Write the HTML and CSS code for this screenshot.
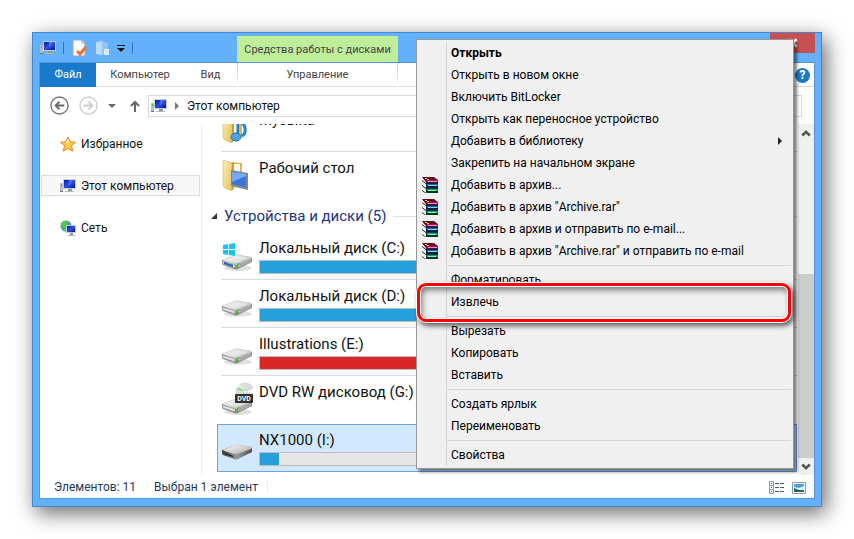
FILE: index.html
```html
<!DOCTYPE html>
<html lang="ru">
<head>
  <meta charset="UTF-8">
  <meta name="viewport" content="width=device-width, initial-scale=1.0">
  <title>Этот компьютер</title>
  <link rel="stylesheet" href="styles.css">
</head>
<body>

  <!-- Иконки -->
  <svg class="sprite" aria-hidden="true">
    <defs>
      <linearGradient id="gMetal" x1="0" y1="0" x2="1" y2="1">
        <stop offset="0" stop-color="#f8f8f8"/><stop offset=".6" stop-color="#cfcfcf"/><stop offset="1" stop-color="#909090"/>
      </linearGradient>
      <linearGradient id="gScreen" x1="0" y1="0" x2="1" y2="1">
        <stop offset="0" stop-color="#0516a8"/><stop offset=".5" stop-color="#2c50e0"/><stop offset="1" stop-color="#0414a0"/>
      </linearGradient>
      <linearGradient id="gFolder" x1="0" y1="0" x2="1" y2="1">
        <stop offset="0" stop-color="#fdf3b8"/><stop offset="1" stop-color="#e2bf5c"/>
      </linearGradient>
      <linearGradient id="gDark" x1="0" y1="0" x2="1" y2="0">
        <stop offset="0" stop-color="#3c3c3c"/><stop offset=".5" stop-color="#9a9a9a"/><stop offset="1" stop-color="#4a4a4a"/>
      </linearGradient>
    </defs>
    <symbol id="pc" viewBox="0 0 16 16">
      <path d="M0 5h3v9H0z" fill="#b9bdc0"/><path d="M1 6h1v2H1z" fill="#43c32c"/><path d="M0 13h3v1H0z" fill="#6c7277"/>
      <path d="M3 1h13v10H3z" fill="#c9ced2"/><path d="M4 2h11v8H4z" fill="url(#gScreen)"/><path d="M9 2h4L9 8z" fill="#6b8dff" opacity=".6"/>
      <path d="M8 11h4v2H8z" fill="#8f9599"/><path d="M5 13h9v1H5z" fill="#b5babd"/>
    </symbol>
    <symbol id="drive" viewBox="0 0 32 20">
      <ellipse cx="17" cy="16" rx="14" ry="3" fill="#000" opacity=".12"/>
      <path d="M1 8L14 3Q16 2 18 3L30 5Q31 6 31 7V10L17 17Q15 18 13 17L2 13Q1 12 1 11Z" fill="#8b8b8b"/>
      <path d="M1 8L14 3Q16 2 18 3L30 5Q31 6 30 7L17 13Q15 13 13 13Z" fill="url(#gMetal)"/>
      <path d="M5 8L15 4L27 6L16 11Z" fill="#fff" opacity=".4"/>
      <path d="M1 9L14 13V16L2 12Z" fill="#e2e2e2" stroke="#888" stroke-width=".5"/>
      <path d="M15 13L30 7V10L17 16Z" fill="#a8a8a8"/>
      <path d="M16 12l2-1v4l-2 1z" fill="#35b51e"/><path d="M17 13l1-.5v1.500l-1 .5z" fill="#b6ff6c"/>
    </symbol>
    <symbol id="books" viewBox="0 0 16 16">
      <path d="M0 0h12l4 3v3H4z" fill="#5e0f2b"/><path d="M4 3h12v2H5z" fill="#a8175f"/><path d="M6 4h9v1H6z" fill="#f08cc6"/>
      <path d="M3 1h2v1H3zM5 2h2v1H5z" fill="#e0d020"/>
      <path d="M4 6h12v5H4z" fill="#082050"/><path d="M5 7h11v2H5z" fill="#1868b8"/><path d="M6 8h9v1H6z" fill="#8ed0ff"/>
      <path d="M4 11h12v5H4z" fill="#06382a"/><path d="M5 12h11v2H5z" fill="#18a060"/><path d="M6 13h8v1H6z" fill="#90f0c0"/>
      <path d="M0 1l4 4v1L0 3zM0 6l4 4v1L0 8zM0 11l4 4v1L0 13z" fill="#fff"/>
      <path d="M0 3l4 3v1L0 4zM0 8l4 3v1L0 9zM0 13l4 3H3L0 14z" fill="#222"/>
    </symbol>
    <symbol id="folder" viewBox="0 0 32 32">
      <path d="M10 3l11 1v22l-11 3z" fill="#d9b65a"/>
      <path d="M12 5h7v18h-7z" fill="#f3f7fa"/>
      <path d="M2 1l9 3v28L4 29Q2 28 2 26z" fill="url(#gFolder)" stroke="#d4b050" stroke-width=".6"/>
      <path d="M11 4l2-1v26l-2 3z" fill="#c89f3e"/>
    </symbol>
  </svg>

  <div class="window">
    <header class="titlebar">
      <div class="quick">
        <svg class="ico"><use href="#pc"/></svg>
        <span class="bar"></span>
        <button class="plain" aria-label="Свойства объекта">
          <svg class="ico" viewBox="0 0 16 16"><path d="M2 0h9l3 3v13H2z" fill="#fff" stroke="#9aa3ad"/><path d="M11 0v3h3" fill="#dde3ea" stroke="#9aa3ad"/><path d="M6 11l3 3 6-7" fill="none" stroke="#ee7038" stroke-width="3"/></svg>
        </button>
        <button class="plain" aria-label="Новая папка">
          <svg class="ico" viewBox="0 0 16 16"><path d="M2 2l6-1v14l-6-1z" fill="#b9dbf8"/><path d="M8 1l6 2v12H8z" fill="#94c4ee"/><path d="M10 9h5v6h-5z" fill="#d8ebfa"/></svg>
        </button>
        <button class="plain" aria-label="Настройка панели">
          <svg class="caret" viewBox="0 0 8 8"><path d="M0 1h8v1H0zM0 4h8L4 8z" fill="#111"/></svg>
        </button>
        <span class="bar"></span>
      </div>
      <div class="context-title">Средства работы с дисками</div>
      <button class="close" aria-label="Закрыть">
        <svg viewBox="0 0 8 8"><path d="M1 1l6 6M7 1L1 7" stroke="#fff" stroke-width="2"/></svg>
      </button>
    </header>

    <div class="client">
      <nav class="tabs">
        <a class="tab file" href="#file">Файл</a>
        <a class="tab" href="#computer">Компьютер</a>
        <a class="tab" href="#view">Вид</a>
        <a class="tab context" href="#manage">Управление</a>
        <button class="plain help" aria-label="Справка">?</button>
      </nav>

      <div class="address-row">
        <button class="plain" aria-label="Назад">
          <svg class="nav-ico" viewBox="0 0 20 20"><circle cx="10" cy="10" r="9" fill="none" stroke="#777" stroke-width="1.500"/><path d="M15 10H6M10 6l-4 4 4 4" fill="none" stroke="#666" stroke-width="2"/></svg>
        </button>
        <button class="plain" aria-label="Вперёд">
          <svg class="nav-ico" viewBox="0 0 20 20"><circle cx="10" cy="10" r="9" fill="none" stroke="#ccc" stroke-width="1.500"/><path d="M5 10h9M10 6l4 4-4 4" fill="none" stroke="#ccc" stroke-width="2"/></svg>
        </button>
        <button class="plain" aria-label="Последние расположения">
          <svg class="caret" viewBox="0 0 8 8"><path d="M0 2h8L4 6z" fill="#666"/></svg>
        </button>
        <button class="plain up" aria-label="Вверх">
          <svg viewBox="0 0 10 12"><path d="M5 12V2M1 6l4-4 4 4" fill="none" stroke="#666" stroke-width="2"/></svg>
        </button>
        <div class="address">
          <svg class="ico"><use href="#pc"/></svg>
          <svg class="crumb" viewBox="0 0 4 8"><path d="M0 0l4 4-4 4z" fill="#777"/></svg>
          <a href="#pc">Этот компьютер</a>
        </div>
        <input class="search" type="search" aria-label="Поиск">
      </div>

      <div class="content">
        <aside class="sidebar">
          <a class="place" href="#favorites">
            <svg class="ico" viewBox="0 0 16 16"><path d="M8 1l2.200 4.700 5.300.6-4 3.500 1.200 5.400L8 12.500l-4.700 2.700 1.200-5.400-4-3.500 5.300-.6z" fill="#ffc94c" stroke="#e8862c"/><path d="M8 3l1.300 4H5z" fill="#fff0b0"/></svg>
            Избранное
          </a>
          <a class="place selected" href="#pc"><svg class="ico"><use href="#pc"/></svg>Этот компьютер</a>
          <a class="place" href="#network">
            <svg class="ico" viewBox="0 0 16 16"><circle cx="6" cy="6" r="5.500" fill="#3b9fe0"/><path d="M2 2l4-1 2 2-2 2-1 3-4-1zM5 8l3 1-2 3-2-2z" fill="#5cc832"/><path d="M6 5h10v8H6z" fill="#c5ccd2"/><path d="M7 6h8v6H7z" fill="url(#gScreen)"/><path d="M10 13h3v2h-3z" fill="#8e969c"/><path d="M8 15h7v1H8z" fill="#aab0b5"/></svg>
            Сеть
          </a>
        </aside>

        <main class="files">
          <div class="tile">
            <svg class="tile-ico" viewBox="0 0 32 32"><use href="#folder"/><path d="M17 26V11q6 0 7 6t-3 8" fill="none" stroke="#2683c8" stroke-width="3"/><ellipse cx="15" cy="26" rx="5" ry="4" fill="#4aa5e4" stroke="#1c70b0"/></svg>
            <div class="info"><span class="name">Музыка</span></div>
          </div>
          <div class="tile last">
            <svg class="tile-ico" viewBox="0 0 32 32"><use href="#folder"/><path d="M10 11l17 3v17l-17-4z" fill="#7c8791"/><path d="M11 13l14 2v13l-14-3z" fill="#3676d8"/><path d="M11 13l14 2v2l-14 6z" fill="#77aaf3"/></svg>
            <div class="info"><span class="name">Рабочий стол</span></div>
          </div>

          <h2 class="group">
            <svg class="fold" viewBox="0 0 6 6"><path d="M6 0v6H0z" fill="#333"/></svg>
            Устройства и диски (5)
          </h2>

          <div class="tile">
            <svg class="tile-ico" viewBox="0 0 32 32">
              <use href="#drive" y="13" width="32" height="20"/>
              <path d="M3 23l9 3v2l-9-3z" fill="#1565b5"/>
              <path d="M2 6l5-1v5H2zM8 5l6-1v6H8zM2 11h5v5l-5-1zM8 11h6v6l-6-1z" fill="#10c4f8"/>
            </svg>
            <div class="info"><span class="name">Локальный диск (C:)</span><div class="usage"><div class="fill" style="width: 78%"></div></div></div>
          </div>
          <div class="tile">
            <svg class="tile-ico" viewBox="0 0 32 32"><use href="#drive" y="11" width="32" height="20"/></svg>
            <div class="info"><span class="name">Локальный диск (D:)</span><div class="usage"><div class="fill" style="width: 85%"></div></div></div>
          </div>
          <div class="tile">
            <svg class="tile-ico" viewBox="0 0 32 32"><use href="#drive" y="11" width="32" height="20"/></svg>
            <div class="info"><span class="name">Illustrations (E:)</span><div class="usage"><div class="fill full" style="width: 96%"></div></div></div>
          </div>
          <div class="tile last">
            <svg class="tile-ico" viewBox="0 0 32 32">
              <use href="#drive" y="13" width="32" height="20"/>
              <circle cx="24" cy="9" r="9" fill="#d9dcdd" stroke="#b4b8ba" stroke-width=".5"/><path d="M24 9L17 4l2-2zM24 9l8-3v4z" fill="#fff"/><path d="M16 6l3-2 5 5z" fill="#8ce07c"/><circle cx="24" cy="9" r="2" fill="#fff" stroke="#999" stroke-width=".5"/>
              <rect x="14" y="11" width="18" height="9" rx="1" fill="#2d3033"/><text class="disc-label" x="23" y="18">DVD</text>
            </svg>
            <div class="info"><span class="name">DVD RW дисковод (G:)</span></div>
          </div>
          <div class="tile selected">
            <svg class="tile-ico" viewBox="0 0 32 32">
              <path d="M1 18L14 13Q16 12 18 13L30 15Q31 16 31 17V20L17 27Q15 28 13 27L2 23Q1 22 1 21Z" fill="url(#gDark)"/>
              <path d="M1 18L14 13Q16 12 18 13L30 15Q31 16 30 17L17 22Q15 22 13 22Z" fill="url(#gMetal)"/>
              <path d="M4 21l8 3v1l-8-3z" fill="#111"/>
            </svg>
            <div class="info"><span class="name">NX1000 (I:)</span><div class="usage"><div class="fill" style="width: 3.500%"></div></div></div>
          </div>
        </main>

        <div class="scrollbar">
          <button class="plain arrow" aria-label="Прокрутить вверх"><svg viewBox="0 0 8 6"><path d="M1 5l3-3 3 3" fill="none" stroke="#555" stroke-width="2"/></svg></button>
          <div class="track"><div class="thumb"></div></div>
          <button class="plain arrow" aria-label="Прокрутить вниз"><svg viewBox="0 0 8 6"><path d="M1 1l3 3 3-3" fill="none" stroke="#555" stroke-width="2"/></svg></button>
        </div>
      </div>

      <footer class="status">
        <span>Элементов: 11</span>
        <span class="picked">Выбран 1 элемент</span>
        <div class="views">
          <button class="plain" aria-label="Таблица">
            <svg class="ico" viewBox="0 0 16 16"><path d="M.5 2.500h4v4h-4zM.5 6.500h4v4h-4zM.5 10.500h4v4h-4z" fill="#fff" stroke="#8d97a3"/><path d="M2 4h1v1H2zM2 12h1v1H2z" fill="#456"/><path d="M2 8h1v1H2z" fill="#e00"/><path d="M6 4h4v1H6zM11 4h4v1h-4zM6 8h4v1H6zM11 8h4v1h-4zM6 12h4v1H6zM11 12h4v1h-4z" fill="#4a5a6c"/></svg>
          </button>
          <button class="plain" aria-label="Крупные значки">
            <svg class="ico" viewBox="0 0 16 16"><path d="M1.500 3.500h13v11h-13z" fill="#fff" stroke="#8d97a3"/><path d="M3 5h10v8H3z" fill="#48a0e0"/><path d="M3 8l5 1 5-2v4H3z" fill="#e5f3fb"/><path d="M3 9l5 2h5v2H3z" fill="#1b6c56"/></svg>
          </button>
        </div>
      </footer>
    </div>
  </div>

  <!-- Контекстное меню диска -->
  <ul class="menu">
    <li><button class="item default">Открыть</button></li>
    <li><button class="item">Открыть в новом окне</button></li>
    <li><button class="item">Включить BitLocker</button></li>
    <li><button class="item">Открыть как переносное устройство</button></li>
    <li><button class="item">Добавить в библиотеку<svg class="more" viewBox="0 0 4 8"><path d="M0 0l4 4-4 4z" fill="#222"/></svg></button></li>
    <li><button class="item">Закрепить на начальном экране</button></li>
    <li><button class="item with-ico"><svg class="ico"><use href="#books"/></svg>Добавить в архив...</button></li>
    <li><button class="item with-ico"><svg class="ico"><use href="#books"/></svg>Добавить в архив "Archive.rar"</button></li>
    <li><button class="item with-ico"><svg class="ico"><use href="#books"/></svg>Добавить в архив и отправить по e-mail...</button></li>
    <li><button class="item with-ico"><svg class="ico"><use href="#books"/></svg>Добавить в архив "Archive.rar" и отправить по e-mail</button></li>
    <li class="sep"></li>
    <li><button class="item">Форматировать</button></li>
    <li class="marked"><button class="item">Извлечь</button></li>
    <li class="sep"></li>
    <li><button class="item">Вырезать</button></li>
    <li><button class="item">Копировать</button></li>
    <li><button class="item">Вставить</button></li>
    <li class="sep"></li>
    <li><button class="item">Создать ярлык</button></li>
    <li><button class="item">Переименовать</button></li>
    <li class="sep"></li>
    <li><button class="item">Свойства</button></li>
  </ul>

</body>
</html>
```
FILE: styles.css
```css
* {
  margin: 0;
  padding: 0;
  box-sizing: border-box;
}

body {
  display: flex;
  height: 100vh;
  padding: 32px;
  overflow: hidden;
  background: #fff;
  font: 12px "Segoe UI", Roboto, "Noto Sans", sans-serif;
  color: #111;
}

a {
  color: inherit;
  text-decoration: none;
}

svg {
  display: block;
  flex: none;
}

.sprite {
  position: absolute;
  width: 0;
  height: 0;
}

.ico {
  width: 16px;
  height: 16px;
}

.caret {
  width: 8px;
  height: 8px;
}

.plain {
  display: flex;
  align-items: center;
  justify-content: center;
  background: none;
  border: none;
  font: inherit;
}

/* Окно */
.window {
  flex: 1;
  display: flex;
  flex-direction: column;
  min-width: 0;
  padding: 0 6px 7px;
  background: #63b1fc;
  border: 1px solid #4488cc;
  box-shadow: 4px 6px 20px rgba(0, 0, 0, 0.6);
}

.titlebar {
  display: grid;
  grid-template-columns: 198px 161px 1fr;
  height: 29px;
}

.quick {
  display: flex;
  align-items: center;
  gap: 7px;
  padding-left: 1px;
}

.quick .bar {
  width: 1px;
  height: 12px;
  background: #3b72ab;
}

.context-title {
  margin-top: 3px;
  background: #bfee9b;
  color: #444;
  font-size: 11px;
  line-height: 27px;
  text-align: center;
  white-space: nowrap;
}

.close {
  display: flex;
  align-items: center;
  justify-content: center;
  justify-self: end;
  width: 45px;
  height: 20px;
  background: #c75050;
  border: none;
}

.close svg {
  width: 10px;
  height: 10px;
}

.client {
  flex: 1;
  display: flex;
  flex-direction: column;
  min-height: 0;
  background: #fff;
  border: 1px solid #4f95d8;
}

/* Лента */
.tabs {
  display: grid;
  grid-template-columns: 56px 88px 53px 161px 1fr;
  align-items: center;
  height: 24px;
  border-bottom: 1px solid #dadbdc;
}

.tab {
  font-size: 11px;
  line-height: 24px;
  text-align: center;
  color: #444;
}

.tab.file {
  background: #1979ca;
  color: #fff;
}

.tab.context {
  border: solid;
  border-width: 0 1px;
  border-image: linear-gradient(#c4c4c4, #fff) 1;
}

.help {
  justify-self: end;
  width: 15px;
  height: 15px;
  margin-right: 4px;
  border-radius: 50%;
  background: #1979ca;
  color: #fff;
  font-weight: bold;
}

.address-row {
  display: flex;
  align-items: center;
  height: 37px;
  padding: 0 12px 0 10px;
  gap: 10px;
}

.nav-ico {
  width: 19px;
  height: 19px;
}

.up {
  margin: 0 -2px 0 4px;
}

.up svg {
  width: 10px;
  height: 12px;
}

.address,
.search {
  height: 22px;
  border: 1px solid #d9d9d9;
}

.address {
  flex: 1;
  display: flex;
  align-items: center;
  gap: 8px;
  padding-left: 2px;
}

.search {
  width: 180px;
}

.crumb,
.more {
  width: 4px;
  height: 8px;
}

/* Содержимое */
.content {
  flex: 1;
  display: flex;
  min-height: 0;
}

.sidebar {
  display: flex;
  flex-direction: column;
  gap: 21px;
  width: 162px;
  padding: 9px 1px 0;
  border-right: 1px solid #f0f0f0;
}

.place {
  display: flex;
  align-items: center;
  gap: 5px;
  height: 21px;
  padding-left: 18px;
  border: 1px solid transparent;
}

.place.selected {
  background: #f7f7f7;
  border-color: #dedede;
}

.files {
  flex: 1;
  display: flex;
  flex-direction: column;
  justify-content: flex-end;
  min-width: 0;
  padding: 0 1px 3px 15px;
  overflow: hidden;
}

.tile {
  flex: none;
  display: flex;
  gap: 6px;
  height: 48px;
  margin-left: 4px;
  border-bottom: 1px solid #dadada;
}

.tile.last {
  border-color: transparent;
}

.tile.selected {
  margin-left: 0;
  padding-left: 3px;
  background: #d1e8ff;
  border: 1px solid #66a7e8;
}

.tile-ico {
  width: 32px;
  height: 32px;
  margin-top: 7px;
}

.info {
  flex: 1;
  padding: 5px 6px 0 0;
}

.selected .info {
  padding-top: 4px;
}

.name {
  display: block;
  height: 23px;
  line-height: 22px;
  font-size: 15px;
}

.usage {
  height: 14px;
  background: #e6e6e6;
  border: 1px solid #bcbcbc;
}

.fill {
  height: 12px;
  background: #26a0da;
}

.fill.full {
  background: #da2626;
}

.disc-label {
  fill: #fff;
  font-size: 7px;
  font-weight: bold;
  text-anchor: middle;
}

.group {
  flex: none;
  display: flex;
  align-items: center;
  gap: 7px;
  height: 32px;
  margin-left: -6px;
  font-size: 15px;
  font-weight: normal;
  color: #1e3287;
}

.group::after {
  content: "";
  flex: 1;
  height: 1px;
  background: #e0e0e0;
}

.fold {
  width: 6px;
  height: 6px;
}

.scrollbar {
  display: flex;
  flex-direction: column;
  width: 16px;
  background: #f0f0f0;
}

.arrow {
  height: 17px;
}

.arrow svg {
  width: 10px;
  height: 8px;
}

.track {
  flex: 1;
  display: flex;
  align-items: flex-end;
}

.thumb {
  width: 100%;
  height: 58%;
  background: #cdcdcd;
}

.status {
  display: flex;
  align-items: center;
  gap: 18px;
  height: 23px;
  padding: 0 7px 0 14px;
  color: #1e395b;
}

.picked {
  padding-right: 9px;
  border-right: 1px solid #eee;
}

.views {
  display: flex;
  gap: 6px;
  margin-left: auto;
}

/* Контекстное меню */
.menu {
  position: absolute;
  top: 39px;
  left: 416px;
  width: 378px;
  padding: 2px;
  list-style: none;
  background: linear-gradient(#d7d7d7, #d7d7d7) 29px 2px / 1px calc(100% - 4px) no-repeat #f0f0f0;
  border: 1px solid #979797;
  box-shadow: 3px 3px 3px rgba(0, 0, 0, 0.5);
}

.item {
  display: flex;
  align-items: center;
  width: 100%;
  height: 22px;
  padding: 0 9px 0 32px;
  background: none;
  border: none;
  font: inherit;
  color: #000;
  white-space: nowrap;
}

.item.default {
  font-weight: bold;
}

.item.with-ico {
  gap: 13px;
  padding-left: 3px;
}

.more {
  margin-left: auto;
}

.sep {
  height: 7px;
  padding-top: 3px;
  margin-left: 28px;
}

.sep::before {
  content: "";
  display: block;
  height: 1px;
  background: #d7d7d7;
}

/* Красная рамка вокруг пункта */
.marked {
  position: relative;
}

.marked::after {
  content: "";
  position: absolute;
  inset: -8px 0 -9px -2px;
  border: 3px solid #f00;
  border-radius: 9px;
  box-shadow: 0 0 0 1px #fff, 2px 3px 5px 1px rgba(0, 0, 0, 0.6),
    inset 0 0 0 1px #fff, inset 2px 4px 6px rgba(0, 0, 0, 0.5);
}
```
